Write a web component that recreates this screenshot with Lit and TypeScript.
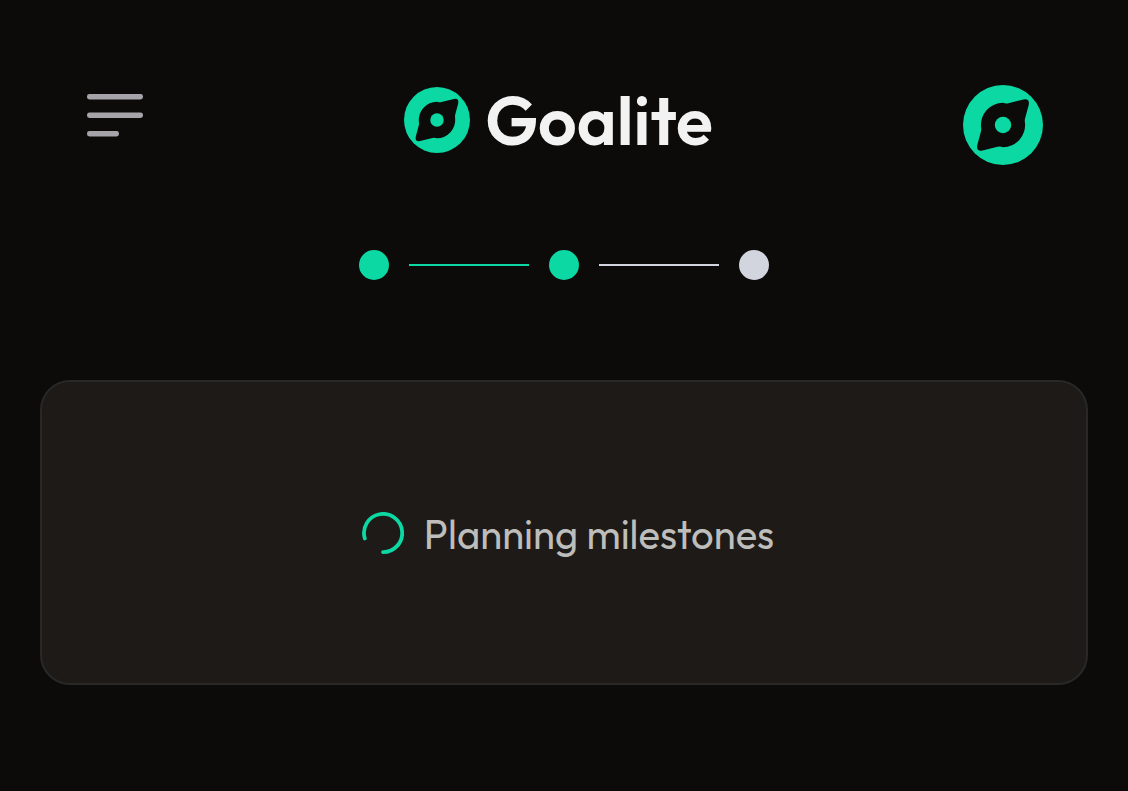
import { LitElement, html, css, svg } from "lit";
import { customElement, property } from "lit/decorators.js";

@customElement("compass-mark")
export class CompassMark extends LitElement {
  static styles = css`
    :host { display: block; flex: none; }
    svg { display: block; width: 100%; height: 100%; }
    .disc { fill: #0bd8a2; }
    .needle { fill: #0c0b09; }
  `;

  render() {
    return html`
      <svg viewBox="0 0 80 80" aria-hidden="true">
        <circle class="disc" cx="40" cy="40" r="40" />
        <path
          class="needle"
          d="M45.5 18.2 L60.5 14.4 Q67 13.2 65.7 20 L62.2 33 Q61.4 35.6 62 38 A22.2 22.2 0 0 1 40 62.2 Q37.2 61.2 34.5 61.8 L19.5 65.6 Q13 66.8 14.3 60 L17.8 47 Q18.6 44.4 18 42 A22.2 22.2 0 0 1 40 17.8 Q42.8 18.8 45.5 18.2 Z"
        />
        <circle class="disc" cx="40" cy="40" r="8.2" />
      </svg>
    `;
  }
}

@customElement("step-progress")
export class StepProgress extends LitElement {
  @property({ type: Number }) total = 3;
  @property({ type: Number }) done = 2;

  static styles = css`
    :host { display: block; }
    .steps {
      display: flex;
      justify-content: center;
      align-items: center;
      gap: 20px;
      margin: 0;
      padding: 0;
      list-style: none;
    }
    .step { display: flex; align-items: center; gap: 20px; }
    .dot { width: 30px; height: 30px; border-radius: 50%; background: #d2d4de; }
    .line { width: 120px; height: 2px; background: #d2d4de; }
    .done { background: #0bd8a2; }
  `;

  render() {
    return html`
      <ol class="steps" aria-label="Progress">
        ${Array.from({ length: this.total }, (_, i) => html`
          <li class="step">
            ${i > 0
              ? html`<span class="line ${i < this.done ? "done" : ""}"></span>`
              : null}
            <span class="dot ${i < this.done ? "done" : ""}"></span>
          </li>
        `)}
      </ol>
    `;
  }
}

@customElement("app-root")
export class AppRoot extends LitElement {
  static styles = css`
    :host {
      display: block;
      box-sizing: border-box;
      min-height: 100vh;
      padding: 85px 40px 40px;
      background: #0c0b09;
      color: #f2f2f2;
      font-family: Outfit, Lato, sans-serif;
    }
    .header {
      display: flex;
      justify-content: space-between;
      align-items: flex-start;
      padding: 0 45px 0 47px;
    }
    button {
      display: block;
      border: 0;
      padding: 0;
      background: none;
      cursor: pointer;
    }
    .menu { width: 67px; padding-top: 9px; }
    .menu svg { display: block; width: 56px; height: 43px; }
    .bar { fill: #a5a4a8; }
    .brand { display: flex; align-items: center; gap: 15px; }
    .brand compass-mark { width: 66px; height: 66px; }
    .name { margin: 0; font-size: 68px; line-height: 70px; font-weight: 600; }
    .avatar { width: 80px; height: 80px; }
    step-progress { margin-top: 85px; }
    .card {
      display: flex;
      justify-content: center;
      align-items: center;
      gap: 20px;
      box-sizing: border-box;
      min-height: 305px;
      margin-top: 100px;
      padding-left: 8px;
      border: 2px solid #282828;
      border-radius: 30px;
      background: #1e1a17;
    }
    .spinner { width: 42px; height: 42px; flex: none; }
    .arc { fill: none; stroke: #0bd8a2; stroke-width: 3.8; stroke-linecap: round; }
    .label { margin: 0; padding-top: 2px; color: #bdbdbb; font-size: 40px; line-height: 50px; font-weight: 450; }
  `;

  render() {
    return html`
      <header class="header">
        <button class="menu" aria-label="Open menu">
          <svg viewBox="0 0 56 43" aria-hidden="true">
            ${[[0, 56], [18.5, 56], [37, 32]].map(
              ([y, w]) => svg`<rect class="bar" y=${y} width=${w} height="5.4" rx="2.4" />`
            )}
          </svg>
        </button>
        <div class="brand">
          <compass-mark></compass-mark>
          <h1 class="name">Goalite</h1>
        </div>
        <button class="avatar" aria-label="Account">
          <compass-mark></compass-mark>
        </button>
      </header>
      <main>
        <step-progress total="3" done="2"></step-progress>
        <section class="card" role="status">
          <svg class="spinner" viewBox="0 0 42 42" aria-hidden="true">
            <path class="arc" d="M2.8 26.5 A19.1 19.1 0 1 1 21 40.1" />
          </svg>
          <p class="label">Planning milestones</p>
        </section>
      </main>
    `;
  }
}
